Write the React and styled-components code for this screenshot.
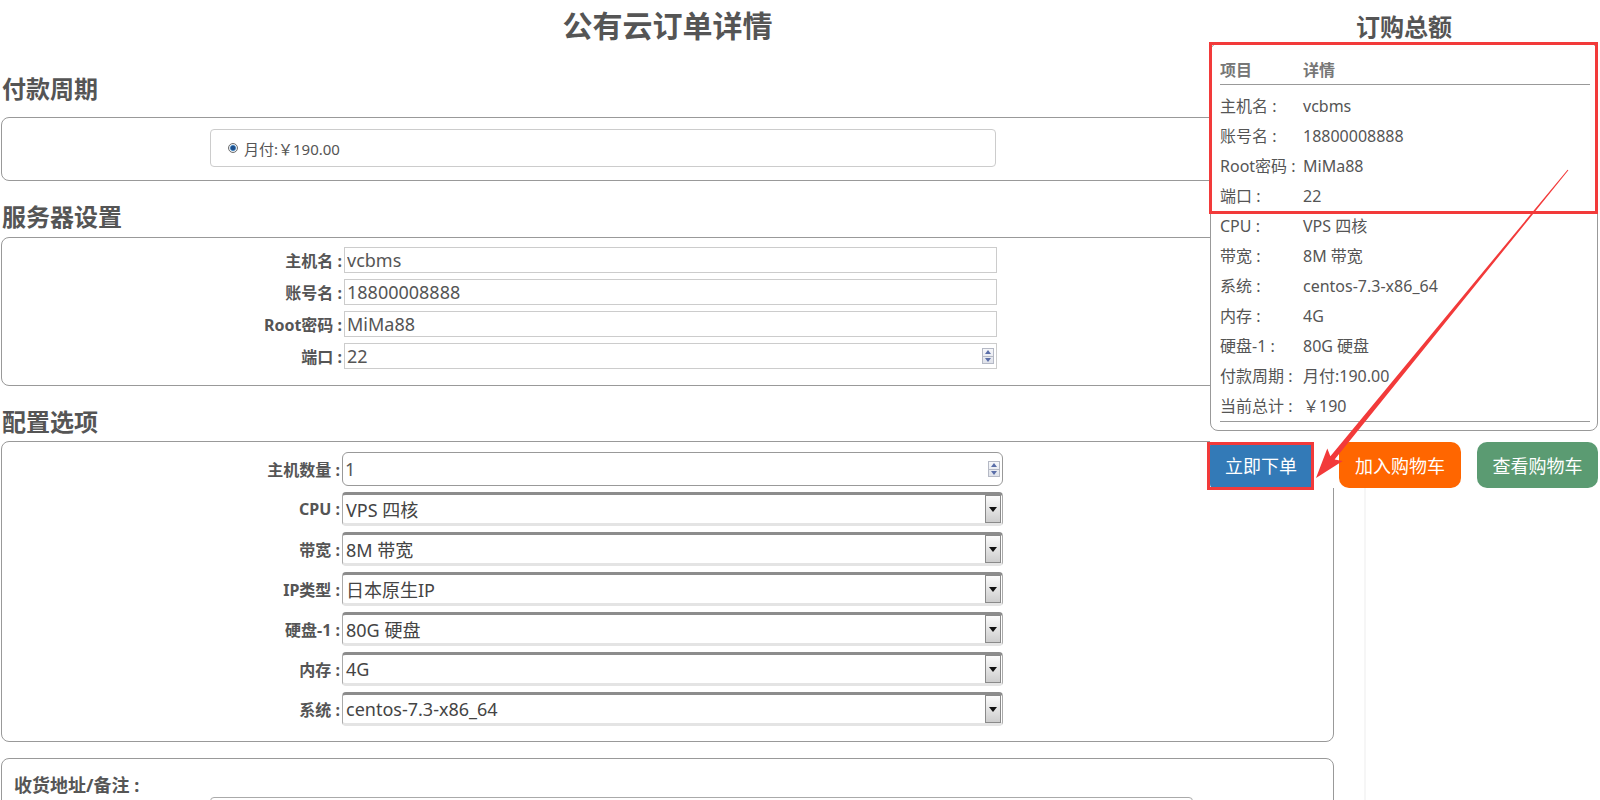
import React from "react";
import styled, { createGlobalStyle } from "styled-components";

const GlobalStyle = createGlobalStyle`
  html, body {
    margin: 0;
    padding: 0;
    background: #fff;
  }
  body {
    font-family: "Noto Sans", "Noto Sans CJK SC", sans-serif;
    color: #555;
  }
  * {
    box-sizing: border-box;
  }
`;

const FONT = `"Noto Sans", "Noto Sans CJK SC", sans-serif`;

const SERVER_FIELDS = [
  { label: "主机名 :", value: "vcbms" },
  { label: "账号名 :", value: "18800008888" },
  { label: "Root密码 :", value: "MiMa88" },
  { label: "端口 :", value: "22", spinner: true },
];

const CONFIG_SELECTS = [
  { label: "CPU :", value: "VPS 四核" },
  { label: "带宽 :", value: "8M 带宽" },
  { label: "IP类型 :", value: "日本原生IP" },
  { label: "硬盘-1 :", value: "80G 硬盘" },
  { label: "内存 :", value: "4G" },
  { label: "系统 :", value: "centos-7.3-x86_64" },
];

const SUMMARY = [
  ["主机名 :", "vcbms"],
  ["账号名 :", "18800008888"],
  ["Root密码 :", "MiMa88"],
  ["端口 :", "22"],
  ["CPU :", "VPS 四核"],
  ["带宽 :", "8M 带宽"],
  ["系统 :", "centos-7.3-x86_64"],
  ["内存 :", "4G"],
  ["硬盘-1 :", "80G 硬盘"],
  ["付款周期 :", "月付:190.00"],
  ["当前总计 :", "￥190"],
];

const Spinner = () => (
  <SpinBox>
    <SpinArrow $up />
    <SpinArrow />
  </SpinBox>
);

const App = () => {
  return (
    <>
      <GlobalStyle />
      <Page>
        <Content>
          <PageTitle>公有云订单详情</PageTitle>

          <SectionTitle $top={22} $bottom={13}>付款周期</SectionTitle>
          <Panel $pad="11px 0 13px 208px">
            <RadioField>
              <Radio />
              <span>月付:￥190.00</span>
            </RadioField>
          </Panel>

          <SectionTitle $top={21} $bottom={5}>服务器设置</SectionTitle>
          <Panel $pad="9px 0 16px 1px">
            <FormGrid $cols="341px 653px" $rowH={26} $gap={6}>
              {SERVER_FIELDS.map((f) => (
                <React.Fragment key={f.label}>
                  <FieldLabel>{f.label}</FieldLabel>
                  <TextField>
                    <FieldInput readOnly defaultValue={f.value} />
                    {f.spinner && <Spinner />}
                  </TextField>
                </React.Fragment>
              ))}
            </FormGrid>
          </Panel>

          <SectionTitle $top={21} $bottom={4}>配置选项</SectionTitle>
          <Panel $pad="10px 0 15px 1px">
            <FormGrid $cols="339px 661px" $rowH={34} $gap={6}>
              <FieldLabel>主机数量 :</FieldLabel>
              <TextField $rounded>
                <FieldInput readOnly defaultValue="1" />
                <Spinner />
              </TextField>
              {CONFIG_SELECTS.map((s) => (
                <React.Fragment key={s.label}>
                  <FieldLabel>{s.label}</FieldLabel>
                  <SelectBox>
                    <SelectValue>{s.value}</SelectValue>
                    <DropButton />
                  </SelectBox>
                </React.Fragment>
              ))}
            </FormGrid>
          </Panel>

          <Panel $pad="15px 0 0 12px" $top={16}>
            <NoteLabel>收货地址/备注 :</NoteLabel>
            <NoteArea readOnly />
          </Panel>
        </Content>

        <Sidebar>
          <SideTitle>订购总额</SideTitle>
          <Summary>
            <SummaryHead>
              <span>项目</span>
              <span>详情</span>
            </SummaryHead>
            <SummaryBody>
              {SUMMARY.map(([k, v]) => (
                <SummaryRow key={k}>
                  <span>{k}</span>
                  <span>{v}</span>
                </SummaryRow>
              ))}
            </SummaryBody>
          </Summary>
          <ButtonRow>
            <ActionButton $bg="#337ab7" $width={102} $radius={4}>
              立即下单
            </ActionButton>
            <ActionButton $bg="#ff6600" $width={122} $radius={10} $ml={27}>
              加入购物车
            </ActionButton>
            <ActionButton $bg="#5b9b72" $width={121} $radius={10} $ml={16}>
              查看购物车
            </ActionButton>
          </ButtonRow>
        </Sidebar>

        <Annotation viewBox="0 0 1600 800" width="1600" height="800">
          <rect
            x="1210.5"
            y="43.5"
            width="386"
            height="169"
            fill="none"
            stroke="#f23a3a"
            strokeWidth="3"
          />
          <rect
            x="1208.5"
            y="443.5"
            width="104"
            height="45"
            fill="none"
            stroke="#f23a3a"
            strokeWidth="3"
          />
          <polygon
            fill="#f23a3a"
            points="1568.4,170.3 1334.6,459.6 1342.7,461.1 1316,478 1327.3,448.5 1330.4,456.2 1567.6,169.7"
          />
        </Annotation>
      </Page>
    </>
  );
};

const Page = styled.div`
  position: relative;
  width: 1600px;
  height: 800px;
  overflow: hidden;
`;

const Content = styled.main`
  width: 1366px;
  height: 800px;
  padding-left: 1px;
  border-right: 2px solid #f6f6f6;
`;

const PageTitle = styled.h1`
  margin: 0;
  width: 1333px;
  text-align: center;
  font-size: 30px;
  line-height: 52px;
  font-weight: 700;
  color: #555;
`;

const SectionTitle = styled.h2`
  margin: ${(p) => p.$top}px 0 ${(p) => p.$bottom}px 1px;
  font-size: 24px;
  line-height: 30px;
  font-weight: 700;
  color: #555;
`;

const Panel = styled.section`
  width: 1333px;
  margin-top: ${(p) => p.$top || 0}px;
  padding: ${(p) => p.$pad};
  border: 1px solid #999;
  border-radius: 8px;
`;

const RadioField = styled.div`
  display: flex;
  align-items: center;
  gap: 6px;
  width: 786px;
  height: 38px;
  padding-left: 17px;
  border: 1px solid #ccc;
  border-radius: 4px;
  font-size: 15px;
  color: #555;
`;

const Radio = styled.span`
  width: 10px;
  height: 10px;
  border-radius: 50%;
  border: 1px solid #6d6d6d;
  background: radial-gradient(
    circle,
    #1d4f8c 0 2px,
    #4f8fc8 2.6px,
    #e9eef4 3.4px
  );
`;

const FormGrid = styled.div`
  display: grid;
  grid-template-columns: ${(p) => p.$cols};
  grid-auto-rows: ${(p) => p.$rowH}px;
  row-gap: ${(p) => p.$gap}px;
  align-items: stretch;
`;

const FieldLabel = styled.label`
  display: flex;
  align-items: center;
  justify-content: flex-end;
  padding-right: 2px;
  font-size: 16px;
  font-weight: 700;
  color: #555;
  white-space: pre;
`;

const TextField = styled.div`
  display: flex;
  align-items: center;
  border: 1px solid ${(p) => (p.$rounded ? "#999" : "#ccc")};
  border-radius: ${(p) => (p.$rounded ? "6px" : "0")};
  background: #fff;
`;

const FieldInput = styled.input`
  flex: 1;
  min-width: 0;
  height: 100%;
  border: none;
  outline: none;
  padding: 0 2px;
  background: transparent;
  font-family: ${FONT};
  font-size: 18px;
  color: #555;
`;

const SpinBox = styled.div`
  display: flex;
  flex-direction: column;
  width: 12px;
  height: 16px;
  margin-right: 2px;
  border: 1px solid #b5b9c5;
  background: linear-gradient(#f6f7fa, #dfe2ea);
`;

const SpinArrow = styled.span`
  flex: 1;
  display: flex;
  align-items: center;
  justify-content: center;
  &::before {
    content: "";
    border-left: 3px solid transparent;
    border-right: 3px solid transparent;
    ${(p) =>
      p.$up
        ? "border-bottom: 4px solid #5a6ea8;"
        : "border-top: 4px solid #5a6ea8;"}
  }
  & + & {
    border-top: 1px solid #b5b9c5;
  }
`;

const SelectBox = styled.div`
  display: flex;
  align-items: stretch;
  border: 1px solid #aaa;
  border-top: 3px solid #8c8c8c;
  border-bottom: 3px solid #e4e4e4;
  border-radius: 4px;
  background: #fff;
`;

const SelectValue = styled.span`
  flex: 1;
  display: flex;
  align-items: center;
  padding-left: 3px;
  font-size: 18px;
  color: #444;
`;

const DropButton = styled.span`
  display: flex;
  align-items: center;
  justify-content: center;
  width: 16px;
  margin: 0 1px 0 0;
  border: 1px solid #8a8a8a;
  background: linear-gradient(#fbfbfb, #cdcdcd);
  &::before {
    content: "";
    border-left: 4px solid transparent;
    border-right: 4px solid transparent;
    border-top: 5px solid #111;
  }
`;

const NoteLabel = styled.div`
  font-size: 18px;
  line-height: 22px;
  font-weight: 700;
  color: #555;
  white-space: pre;
`;

const NoteArea = styled.textarea`
  display: block;
  margin: 1px 0 0 196px;
  width: 983px;
  height: 80px;
  border: 1px solid #aaa;
  border-radius: 4px;
  resize: none;
`;

const Sidebar = styled.aside`
  position: absolute;
  top: 0;
  left: 1210px;
  width: 388px;
  background: #fff;
`;

const SideTitle = styled.h3`
  margin: 0;
  padding-top: 10px;
  text-align: center;
  font-size: 24px;
  line-height: 33px;
  font-weight: 700;
  color: #555;
`;

const Summary = styled.div`
  height: 388px;
  padding: 0 7px 8px 9px;
  border: 1px solid #999;
  border-radius: 8px;
  background: #fff;
`;

const SummaryHead = styled.div`
  display: grid;
  grid-template-columns: 83px 1fr;
  margin-top: 13px;
  line-height: 27px;
  font-size: 16px;
  font-weight: 700;
  color: #777;
  border-bottom: 1px solid #999;
`;

const SummaryBody = styled.div`
  padding-top: 6px;
  border-bottom: 1px solid #999;
`;

const SummaryRow = styled.div`
  display: grid;
  grid-template-columns: 83px 1fr;
  line-height: 30px;
  font-size: 16px;
  color: #555;
  white-space: pre;
`;

const ButtonRow = styled.div`
  display: flex;
  margin-top: 11px;
`;

const ActionButton = styled.button`
  width: ${(p) => p.$width}px;
  height: 46px;
  margin-left: ${(p) => p.$ml || 0}px;
  border: none;
  border-radius: ${(p) => p.$radius}px;
  background: ${(p) => p.$bg};
  color: #fff;
  font-family: ${FONT};
  font-size: 18px;
  cursor: pointer;
`;

const Annotation = styled.svg`
  position: absolute;
  top: 0;
  left: 0;
  pointer-events: none;
`;

export default App;
